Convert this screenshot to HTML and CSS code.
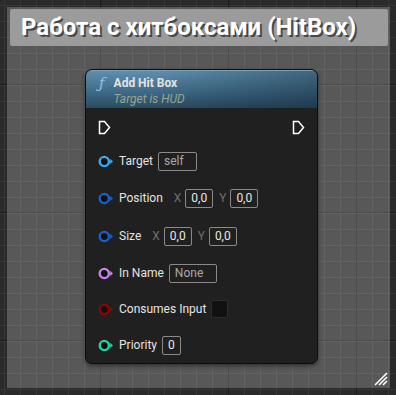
FILE: index.html
```html
<!DOCTYPE html>
<html lang="ru">
<head>
    <meta charset="UTF-8">
    <title>Add Hit Box</title>
    <link rel="stylesheet" href="styles.css">
</head>
<body>
    <div class="comment">
        <div class="comment-title">Работа с хитбоксами (HitBox)</div>

        <div class="node">
            <div class="node-header">
                <span class="fn-icon">ƒ</span>
                <div class="node-titles">
                    <div class="node-name">Add Hit Box</div>
                    <div class="node-sub">Target is HUD</div>
                </div>
            </div>
            <div class="node-body">
                <div class="row exec-row">
                    <svg class="exec" width="13" height="15" viewBox="0 0 13 15"><path d="M1.5 1.5 H6.5 L11.5 7.5 L6.5 13.5 H1.5 Z" fill="none" stroke="#fff" stroke-width="1.5" stroke-linejoin="miter"/></svg>
                    <svg class="exec" width="13" height="15" viewBox="0 0 13 15"><path d="M1.5 1.5 H6.5 L11.5 7.5 L6.5 13.5 H1.5 Z" fill="none" stroke="#fff" stroke-width="1.5" stroke-linejoin="miter"/></svg>
                </div>

                <div class="row">
                    <svg class="pin" width="16" height="13" viewBox="0 0 16 13"><circle cx="6.3" cy="6.5" r="4.6" fill="#111" stroke="#3fa6f0" stroke-width="2.4"/><path d="M12.2 3.8 L15 6.5 L12.2 9.2 Z" fill="#3fa6f0"/></svg>
                    <span class="label">Target</span>
                    <span class="field muted wide">self</span>
                </div>

                <div class="row vec">
                    <svg class="pin" width="16" height="13" viewBox="0 0 16 13"><circle cx="6.3" cy="6.5" r="4.6" fill="#111" stroke="#1a5fc8" stroke-width="2.4"/><path d="M12.2 3.8 L15 6.5 L12.2 9.2 Z" fill="#1a5fc8"/></svg>
                    <span class="label">Position</span>
                    <span class="axis">X</span><span class="field">0,0</span>
                    <span class="axis">Y</span><span class="field">0,0</span>
                </div>

                <div class="row vec">
                    <svg class="pin" width="16" height="13" viewBox="0 0 16 13"><circle cx="6.3" cy="6.5" r="4.6" fill="#111" stroke="#1a5fc8" stroke-width="2.4"/><path d="M12.2 3.8 L15 6.5 L12.2 9.2 Z" fill="#1a5fc8"/></svg>
                    <span class="label">Size</span>
                    <span class="axis">X</span><span class="field">0,0</span>
                    <span class="axis">Y</span><span class="field">0,0</span>
                </div>

                <div class="row">
                    <svg class="pin" width="16" height="13" viewBox="0 0 16 13"><circle cx="6.3" cy="6.5" r="4.6" fill="#111" stroke="#c983ec" stroke-width="2.4"/><path d="M12.2 3.8 L15 6.5 L12.2 9.2 Z" fill="#c983ec"/></svg>
                    <span class="label">In Name</span>
                    <span class="field muted name">None</span>
                </div>

                <div class="row">
                    <svg class="pin" width="16" height="13" viewBox="0 0 16 13"><circle cx="6.3" cy="6.5" r="4.6" fill="#111" stroke="#8a0606" stroke-width="2.4"/><path d="M12.2 3.8 L15 6.5 L12.2 9.2 Z" fill="#8a0606"/></svg>
                    <span class="label">Consumes Input</span>
                    <span class="checkbox"></span>
                </div>

                <div class="row">
                    <svg class="pin" width="16" height="13" viewBox="0 0 16 13"><circle cx="6.3" cy="6.5" r="4.6" fill="#111" stroke="#1ed6a4" stroke-width="2.4"/><path d="M12.2 3.8 L15 6.5 L12.2 9.2 Z" fill="#1ed6a4"/></svg>
                    <span class="label">Priority</span>
                    <span class="field">0</span>
                </div>
            </div>
        </div>

        <svg class="resize" width="14" height="14" viewBox="0 0 14 14">
            <path d="M1 13 L13 1 M5 13 L13 5 M9 13 L13 9" stroke="#fff" stroke-width="1.6"/>
        </svg>
    </div>
</body>
</html>
```

FILE: styles.css
```css
body {
    margin: 0;
    width: 396px;
    height: 395px;
    overflow: hidden;
    font-family: Roboto, "Noto Sans", sans-serif;
    background-color: #2a2a2a;
    background-image:
        linear-gradient(#1b1b1b 1px, transparent 1px),
        linear-gradient(90deg, #1b1b1b 1px, transparent 1px),
        linear-gradient(#363636 1px, transparent 1px),
        linear-gradient(90deg, #363636 1px, transparent 1px);
    background-size: 128px 128px, 128px 128px, 16px 16px, 16px 16px;
    background-position: 0 84px, 100px 0, 0 5px, 4px 0;
    padding: 7px 6px 7px 7px;
    box-sizing: border-box;
}

/* comment box */
.comment {
    position: relative;
    height: 381px;
    background-color: rgba(255, 255, 255, 0.22);
    padding: 2px 2px 0 3px;
    box-sizing: border-box;
}
.comment-title {
    height: 37px;
    background-color: #9b9b9b;
    border-radius: 2px;
    color: #fff;
    font-weight: bold;
    font-size: 24px;
    line-height: 37px;
    padding-left: 11px;
    text-shadow: 2px 2px 0 rgba(0, 0, 0, 0.55);
}
.resize {
    position: absolute;
    right: 2px;
    bottom: 2px;
}

/* node */
.node {
    width: 231px;
    margin: 23px 0 0 75px;
    background-color: #1f201f;
    border: 1px solid #0c0c0c;
    border-radius: 7px;
    box-shadow: 0 2px 4px rgba(0, 0, 0, 0.45);
    overflow: hidden;
}
.node-header {
    display: flex;
    gap: 9px;
    height: 38px;
    padding: 4px 10px 0 13px;
    box-sizing: border-box;
    background:
        linear-gradient(90deg, rgba(0, 0, 0, 0) 30%, rgba(10, 25, 35, 0.35) 100%),
        linear-gradient(#5f8fae, #3f6b88 55%, #2a4a60);
    border-top: 1px solid #7aa3bd;
}
.fn-icon {
    color: #8fc4ef;
    font-family: "DejaVu Serif", serif;
    font-style: italic;
    font-size: 15px;
    line-height: 16px;
}
.node-name {
    color: #e3e3e3;
    font-weight: bold;
    font-size: 12px;
    line-height: 16px;
}
.node-sub {
    color: #9aa68f;
    font-style: italic;
    font-size: 12px;
    line-height: 16px;
}

.node-body {
    display: flex;
    flex-direction: column;
    gap: 16px;
    padding: 11px 12px 8px 12px;
}
.row {
    display: flex;
    align-items: center;
    height: 20px;
    color: #e4e4e4;
    font-size: 12px;
}
.exec-row {
    height: 16px;
    justify-content: space-between;
}
.vec {
    height: 22px;
}
.pin {
    margin-right: 5px;
}
.label {
    margin-right: 5px;
}
.axis {
    color: #6f6f6f;
    margin: 0 4px 0 6px;
}
.field {
    border: 1px solid #8a8a8a;
    border-radius: 2px;
    height: 17px;
    line-height: 17px;
    padding: 0 5px;
    color: #e8e8e8;
}
.muted {
    color: #a9a9a9;
}
.wide {
    width: 27px;
}
.name {
    width: 36px;
}
.checkbox {
    width: 15px;
    height: 16px;
    background-color: #111;
    border: 1px solid #2e2e2e;
    border-radius: 2px;
}
```
